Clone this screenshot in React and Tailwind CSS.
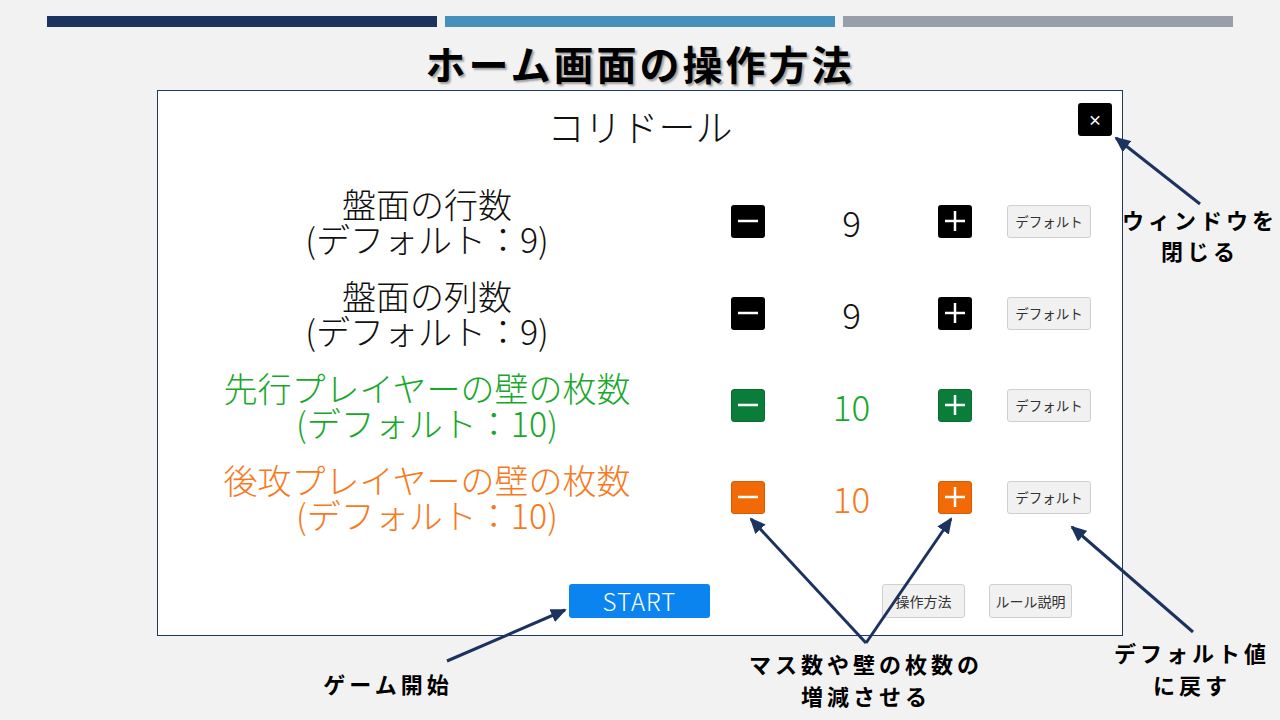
import React from "react";

const JP = { fontFamily: '"Noto Sans CJK JP", "Noto Sans", sans-serif' };

function MinusIcon() {
  return (
    <svg width="20" height="20" viewBox="0 0 20 20">
      <line x1="0" y1="10" x2="20" y2="10" stroke="white" strokeWidth="2.5" />
    </svg>
  );
}
function PlusIcon() {
  return (
    <svg width="20" height="20" viewBox="0 0 20 20">
      <line x1="0" y1="10" x2="20" y2="10" stroke="white" strokeWidth="2.5" />
      <line x1="10" y1="0" x2="10" y2="20" stroke="white" strokeWidth="2.5" />
    </svg>
  );
}

function Row({ title, def, value, textCls, btnCls }) {
  return (
    <div className="flex items-center h-[92px]">
      <div className={`w-[538px] text-center text-[34px] leading-[35px] font-light ${textCls}`}>
        <div>{title}</div>
        <div>(デフォルト：{def})</div>
      </div>
      <button className={`ml-[35px] w-[34px] h-[33px] rounded-[3px] flex items-center justify-center ${btnCls}`}>
        <MinusIcon />
      </button>
      <div className={`w-[173px] text-center text-[35px] leading-none font-light ${textCls}`}>{value}</div>
      <button className={`w-[34px] h-[33px] rounded-[3px] flex items-center justify-center ${btnCls}`}>
        <PlusIcon />
      </button>
      <button className="ml-[35px] w-[84px] h-[33px] rounded-[3px] bg-[#f1f1f1] border border-[#cfcfcf] text-[13.5px] text-[#333]">
        デフォルト
      </button>
    </div>
  );
}

export default function App() {
  return (
    <div className="relative w-[1280px] h-[720px] bg-[#f2f2f2] overflow-hidden" style={JP}>
      <div className="flex gap-[8px] px-[47px] pt-[16px]">
        <div className="w-[390px] h-[11px] bg-[#1c3360]" />
        <div className="w-[390px] h-[11px] bg-[#4591bb]" />
        <div className="w-[390px] h-[11px] bg-[#989fa8]" />
      </div>
      <h1
        className="mt-[12px] text-center text-[40px] leading-[48px] font-bold tracking-[3px] text-black"
        style={{ textShadow: "2px 2px 2px rgba(0,0,0,0.35)" }}
      >
        ホーム画面の操作方法
      </h1>
      <div className="ml-[157px] mt-[3px] w-[966px] h-[546px] bg-white border border-[#203864] flex flex-col">
        <div className="relative h-[84px]">
          <div className="pt-[11px] text-center text-[37px] leading-[48px] font-light text-[#111]">コリドール</div>
          <button className="absolute top-[12px] right-[10px] w-[34px] h-[33px] bg-black rounded-[3px] text-white text-[14px] font-bold flex items-center justify-center">
            ×
          </button>
        </div>
        <Row title="盤面の行数" def="9" value="9" textCls="text-[#111]" btnCls="bg-black" />
        <Row title="盤面の列数" def="9" value="9" textCls="text-[#111]" btnCls="bg-black" />
        <Row title="先行プレイヤーの壁の枚数" def="10" value="10" textCls="text-[#17a82a]" btnCls="bg-[#0b7d3b] border border-[#0a6b33]" />
        <Row title="後攻プレイヤーの壁の枚数" def="10" value="10" textCls="text-[#f7791c]" btnCls="bg-[#f26a05] border border-[#d45c04]" />
        <div className="flex items-center mt-[41px]">
          <button className="ml-[411px] w-[141px] h-[34px] bg-[#0b84f0] rounded-[3px] text-white text-[24px] tracking-[1px] leading-none font-light flex items-center justify-center">
            START
          </button>
          <button className="ml-[172px] w-[83px] h-[34px] rounded-[3px] bg-[#f1f1f1] border border-[#cfcfcf] text-[14px] text-[#333]">
            操作方法
          </button>
          <button className="ml-[24px] w-[83px] h-[34px] rounded-[3px] bg-[#f1f1f1] border border-[#cfcfcf] text-[14px] text-[#333]">
            ルール説明
          </button>
        </div>
      </div>

      {/* callouts */}
      <div className="absolute left-[1120px] top-[204px] w-[160px] text-center text-[22px] leading-[31px] font-bold tracking-[4px] text-black">
        <div>ウィンドウを</div>
        <div>閉じる</div>
      </div>
      <div className="absolute left-[1102px] top-[636px] w-[180px] text-center text-[22px] leading-[32px] font-bold tracking-[4px] text-black">
        <div>デフォルト値</div>
        <div>に戻す</div>
      </div>
      <div className="absolute left-[736px] top-[647px] w-[260px] text-center text-[22px] leading-[32px] font-bold tracking-[4px] text-black">
        <div>マス数や壁の枚数の</div>
        <div>増減させる</div>
      </div>
      <div className="absolute left-[308px] top-[667px] w-[160px] text-center text-[22px] leading-[32px] font-bold tracking-[4px] text-black">
        ゲーム開始
      </div>

      <svg className="absolute inset-0 pointer-events-none" width="1280" height="720" viewBox="0 0 1280 720">
        <defs>
          <marker id="ah" markerUnits="userSpaceOnUse" markerWidth="16" markerHeight="14" refX="14" refY="7" orient="auto">
            <path d="M0,0 L16,7 L0,14 Z" fill="#1c3360" />
          </marker>
        </defs>
        <g stroke="#1c3360" strokeWidth="3" fill="none">
          <line x1="1200" y1="204" x2="1116" y2="138" markerEnd="url(#ah)" />
          <line x1="866" y1="643" x2="751" y2="519" markerEnd="url(#ah)" />
          <line x1="866" y1="643" x2="951" y2="519" markerEnd="url(#ah)" />
          <line x1="1193" y1="632" x2="1072" y2="527" markerEnd="url(#ah)" />
          <line x1="447" y1="661" x2="565" y2="610" markerEnd="url(#ah)" />
        </g>
      </svg>
    </div>
  );
}
